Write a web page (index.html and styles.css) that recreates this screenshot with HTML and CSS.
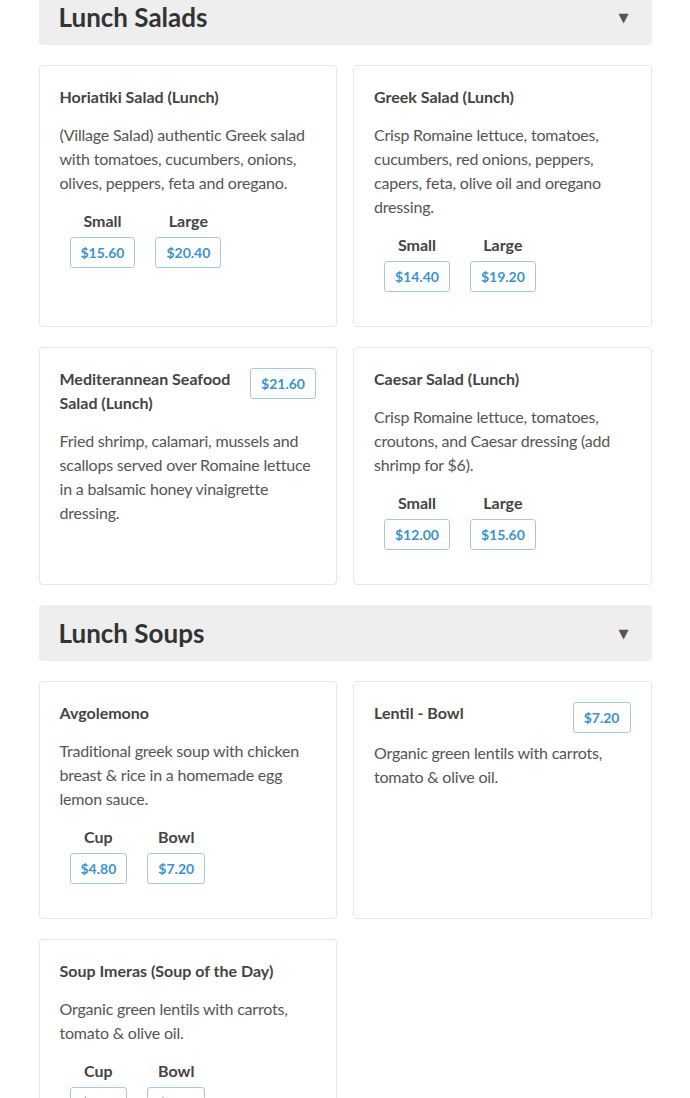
FILE: index.html
```html
<!DOCTYPE html>
<html>
<head>
<meta charset="utf-8">
<link rel="stylesheet" href="styles.css">
</head>
<body>
<div class="menu">
  <section class="section">
    <div class="section-header"><h2 class="section-title">Lunch Salads</h2><span class="caret">▼</span></div>
    <div class="grid">
      <div class="card">
        <h3 class="item-title">Horiatiki Salad (Lunch)</h3>
        <p class="item-desc">(Village Salad) authentic Greek salad with tomatoes, cucumbers, onions, olives, peppers, feta and oregano.</p>
        <div class="prices">
          <div class="price-group"><span class="price-label">Small</span><span class="price">$15.60</span></div>
          <div class="price-group"><span class="price-label">Large</span><span class="price">$20.40</span></div>
        </div>
      </div>
      <div class="card">
        <h3 class="item-title">Greek Salad (Lunch)</h3>
        <p class="item-desc">Crisp Romaine lettuce, tomatoes, cucumbers, red onions, peppers, capers, feta, olive oil and oregano dressing.</p>
        <div class="prices">
          <div class="price-group"><span class="price-label">Small</span><span class="price">$14.40</span></div>
          <div class="price-group"><span class="price-label">Large</span><span class="price">$19.20</span></div>
        </div>
      </div>
      <div class="card">
        <span class="price price-single">$21.60</span>
        <h3 class="item-title">Mediterannean Seafood Salad (Lunch)</h3>
        <p class="item-desc">Fried shrimp, calamari, mussels and scallops served over Romaine lettuce in a balsamic honey vinaigrette dressing.</p>
      </div>
      <div class="card">
        <h3 class="item-title">Caesar Salad (Lunch)</h3>
        <p class="item-desc">Crisp Romaine lettuce, tomatoes, croutons, and Caesar dressing (add shrimp for $6).</p>
        <div class="prices">
          <div class="price-group"><span class="price-label">Small</span><span class="price">$12.00</span></div>
          <div class="price-group"><span class="price-label">Large</span><span class="price">$15.60</span></div>
        </div>
      </div>
    </div>
  </section>
  <section class="section">
    <div class="section-header"><h2 class="section-title">Lunch Soups</h2><span class="caret">▼</span></div>
    <div class="grid">
      <div class="card">
        <h3 class="item-title">Avgolemono</h3>
        <p class="item-desc">Traditional greek soup with chicken breast &amp; rice in a homemade egg lemon sauce.</p>
        <div class="prices">
          <div class="price-group"><span class="price-label">Cup</span><span class="price">$4.80</span></div>
          <div class="price-group"><span class="price-label">Bowl</span><span class="price">$7.20</span></div>
        </div>
      </div>
      <div class="card">
        <span class="price price-single">$7.20</span>
        <h3 class="item-title item-title-short">Lentil - Bowl</h3>
        <p class="item-desc">Organic green lentils with carrots, tomato &amp; olive oil.</p>
      </div>
      <div class="card">
        <h3 class="item-title">Soup Imeras (Soup of the Day)</h3>
        <p class="item-desc">Organic green lentils with carrots, tomato &amp; olive oil.</p>
        <div class="prices">
          <div class="price-group"><span class="price-label">Cup</span><span class="price">$4.80</span></div>
          <div class="price-group"><span class="price-label">Bowl</span><span class="price">$7.20</span></div>
        </div>
      </div>
    </div>
  </section>
</div>
</body>
</html>
```
FILE: styles.css
```css
html, body {
  margin: 0;
  padding: 0;
  background: #ffffff;
}
body {
  font-family: Lato, "Noto Sans", sans-serif;
  color: #444;
}
.menu {
  width: 613px;
  margin: -11px auto 0;
}
.section {
  margin-bottom: 20px;
}
.section-header {
  display: flex;
  align-items: center;
  justify-content: space-between;
  height: 56px;
  padding: 0 23px 0 20px;
  box-sizing: border-box;
  background: #eeeeee;
  border-radius: 4px;
  margin-bottom: 20px;
}
.section-title {
  margin: 0;
  font-size: 26px;
  line-height: 30px;
  font-weight: 700;
  color: #333;
  letter-spacing: 0;
}
.caret {
  font-size: 13px;
  color: #555;
  font-family: "DejaVu Sans", sans-serif;
}
.grid {
  display: grid;
  grid-template-columns: 1fr 1fr;
  column-gap: 16px;
  row-gap: 20px;
}
.card {
  border: 1px solid #e6e6e6;
  border-radius: 4px;
  padding: 19px 20px 20px;
}
.item-title {
  margin: 0 0 14px;
  font-size: 16px;
  line-height: 24px;
  font-weight: 700;
  color: #444;
}
.item-title-short {
  margin-bottom: 16px;
}
.item-desc {
  margin: 0 0 14px;
  font-size: 16px;
  line-height: 24px;
  color: #555;
  letter-spacing: -0.2px;
}
.prices {
  display: flex;
  margin-bottom: 14px;
}
.price-group {
  display: flex;
  flex-direction: column;
  align-items: center;
  margin: 0 10px;
}
.price-label {
  font-size: 16px;
  line-height: 24px;
  font-weight: 700;
  color: #444;
  margin-bottom: 4px;
}
.price {
  display: inline-block;
  font-size: 14px;
  line-height: 19px;
  font-weight: 700;
  color: #3b94cc;
  border: 1px solid #a9c9dd;
  border-radius: 3px;
  padding: 5px 10px;
}
.price-single {
  float: right;
  margin: 1px 0 0 10px;
}
```
